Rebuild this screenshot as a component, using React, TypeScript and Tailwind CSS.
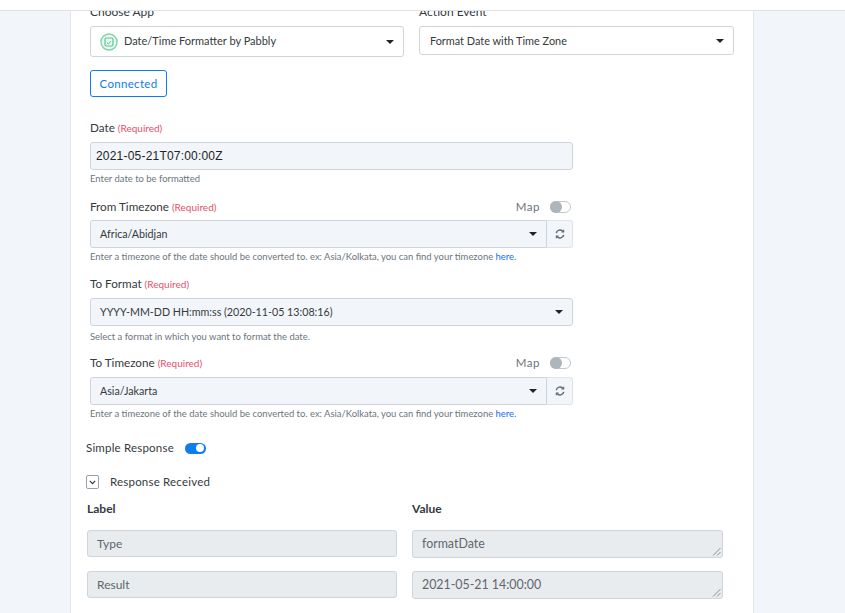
const font = "font-['Lato','Noto_Sans',sans-serif]";

function Required() {
  return <span className="ml-[3px] text-[10px] text-[#e2506c]">(Required)</span>;
}

function Caret() {
  return <span className="h-0 w-0 border-x-[4px] border-t-[4px] border-x-transparent border-t-[#212529]" />;
}

function AppLogo() {
  return (
    <svg width="18" height="18" viewBox="0 0 18 18" fill="none" className="shrink-0">
      <circle cx="9" cy="9" r="8" fill="#eaf8f1" stroke="#7fd3aa" strokeWidth="1.4" />
      <rect x="5" y="5" width="8" height="8" rx="1.5" stroke="#5fc396" strokeWidth="1.2" />
      <path d="M7 10l1.4 1L11 8" stroke="#5fc396" strokeWidth="1" />
    </svg>
  );
}

function RefreshIcon() {
  return (
    <svg width="10" height="10" viewBox="0 0 12 12" fill="none" stroke="#5b6670" strokeWidth="1.7">
      <path d="M1.5 5A4.6 4.6 0 0 1 9.6 3" />
      <path d="M10.5 7A4.6 4.6 0 0 1 2.4 9" />
      <path d="M10.4 0.8V3.6H7.6" strokeWidth="1.3" />
      <path d="M1.6 11.2V8.4H4.4" strokeWidth="1.3" />
    </svg>
  );
}

function MapToggle() {
  return (
    <div className="flex items-center gap-[10px]">
      <span className="text-[11.5px] tracking-[0.5px] text-[#6c757d]">Map</span>
      <span className="flex h-[12px] w-[21px] items-center rounded-full border border-[#c3c8cd] bg-white">
        <span className="-ml-px h-[12px] w-[12px] rounded-full bg-[#adb5bd]" />
      </span>
    </div>
  );
}

function HereHelp() {
  return (
    <p className="mt-[3px] text-[9.45px] leading-[12px] text-[#6c757d]">
      Enter a timezone of the date should be converted to. ex: Asia/Kolkata, you can find your timezone{" "}
      <span className="text-[#0d6efd]">here.</span>
    </p>
  );
}

function SelectWithRefresh({ value }: { value: string }) {
  return (
    <div className="flex h-[28px]">
      <div className="flex w-[457px] items-center justify-between rounded-l-[3px] border border-[#ced4da] bg-[#f2f5f9] pl-[9px] pr-[9px] text-[10.7px] text-[#343a40]">
        <span>{value}</span>
        <Caret />
      </div>
      <div className="flex w-[26px] items-center justify-center rounded-r-[3px] border border-l-0 border-[#e0e4e8] bg-[#f2f5f9]">
        <RefreshIcon />
      </div>
    </div>
  );
}

function ReadonlyPair({ label, value }: { label: string; value: string }) {
  return (
    <div className="flex gap-[15px]">
      <div className="flex h-[27px] w-[310px] items-center rounded-[3px] border border-[#ced4da] bg-[#e9ecef] pl-[9px] text-[12px] text-[#5f666d]">
        {label}
      </div>
      <div className="relative flex h-[28px] w-[311px] items-center rounded-[3px] border border-[#ced4da] bg-[#e9ecef] pl-[9px] text-[12.4px] text-[#5f666d]">
        {value}
        <svg width="9" height="9" viewBox="0 0 9 9" className="absolute bottom-[1px] right-[1px]" stroke="#777" strokeWidth="0.8">
          <path d="M1 8.5L8.5 1M5 8.5L8.5 5" />
        </svg>
      </div>
    </div>
  );
}

export default function App() {
  return (
    <div className={`flex h-[613px] w-[845px] flex-col overflow-hidden bg-[#f2f5f9] ${font}`}>
      <div className="relative z-10 h-[11px] shrink-0 border-b border-[#dfe2e6] bg-white" />
      <div className="ml-[70px] flex h-[602px] w-[684px] flex-col overflow-hidden border-x border-[#e3e7ec] bg-white pl-[19px]">
        {/* app + event selects */}
        <div className="-mt-[7px] flex gap-[15px]">
          <div className="w-[314px]">
            <div className="h-[15px] text-[12px] leading-[15px] text-[#343a40]">Choose App</div>
            <div className="mt-[7px] flex h-[31px] items-center justify-between rounded-[3px] border border-[#ced4da] bg-white pl-[9px] pr-[9px]">
              <span className="flex items-center gap-[6px] text-[11px] text-[#343a40]">
                <AppLogo />
                Date/Time Formatter by Pabbly
              </span>
              <Caret />
            </div>
          </div>
          <div className="w-[315px]">
            <div className="h-[15px] text-[12px] leading-[15px] text-[#343a40]">Action Event</div>
            <div className="mt-[7px] flex h-[29px] items-center justify-between rounded-[3px] border border-[#ced4da] bg-white pl-[10px] pr-[9px] pt-px text-[10.9px] text-[#343a40]">
              Format Date with Time Zone
              <Caret />
            </div>
          </div>
        </div>

        <button className="mt-[13px] h-[27px] w-[77px] rounded-[3px] border border-[#0d7bf2] text-[11.5px] tracking-[0.3px] text-[#0d7bf2]">
          Connected
        </button>

        <div className="mt-[24px] w-[483px]">
          <div className="h-[13px] text-[11.7px] leading-[13px] text-[#343a40]">
            Date
            <Required />
          </div>
          <div className="mt-[8px] flex h-[28px] items-center rounded-[3px] border border-[#ced4da] bg-[#f2f5f9] pl-[5px] font-['Liberation_Sans',sans-serif] text-[12px] tracking-[0.2px] text-[#212529]">
            2021-05-21T07:00:00Z
          </div>
          <p className="mt-[3px] text-[9.45px] leading-[12px] text-[#6c757d]">Enter date to be formatted</p>

          <div className="mt-[14px] flex h-[16px] items-center justify-between pr-[2px]">
            <div className="text-[11.7px] text-[#343a40]">
              From Timezone
              <Required />
            </div>
            <MapToggle />
          </div>
          <div className="mt-[5px]">
            <SelectWithRefresh value="Africa/Abidjan" />
          </div>
          <HereHelp />

          <div className="mt-[14px] h-[13px] text-[11.7px] leading-[13px] text-[#343a40]">
            To Format
            <Required />
          </div>
          <div className="mt-[8px] flex h-[28px] items-center justify-between rounded-[3px] border border-[#ced4da] bg-[#f2f5f9] pl-[9px] pr-[9px] text-[10.7px] text-[#343a40]">
            YYYY-MM-DD HH:mm:ss (2020-11-05 13:08:16)
            <Caret />
          </div>
          <p className="mt-[5px] text-[9.45px] leading-[12px] text-[#6c757d]">Select a format in which you want to format the date.</p>

          <div className="mt-[12px] flex h-[16px] items-center justify-between pr-[2px]">
            <div className="text-[11.7px] text-[#343a40]">
              To Timezone
              <Required />
            </div>
            <MapToggle />
          </div>
          <div className="mt-[6px]">
            <SelectWithRefresh value="Asia/Jakarta" />
          </div>
          <HereHelp />
        </div>

        <div className="-ml-[4px] mt-[21px] flex h-[14px] items-center gap-[11px] text-[11.5px] tracking-[0.2px] text-[#343a40]">
          Simple Response
          <span className="flex h-[11px] w-[21px] items-center justify-end rounded-full bg-[#0d7bf2] pr-[2px]">
            <span className="h-[8px] w-[8px] rounded-full bg-white" />
          </span>
        </div>

        <div className="-ml-[4px] mt-[20px] flex h-[14px] items-center gap-[11px] text-[11.5px] tracking-[0.2px] text-[#343a40]">
          <span className="flex h-[14px] w-[13px] items-center justify-center rounded-[2px] border border-[#9aa2a9]">
            <svg width="7" height="5" viewBox="0 0 7 5" fill="none" stroke="#343a40" strokeWidth="1.2">
              <path d="M0.8 0.8L3.5 3.6L6.2 0.8" />
            </svg>
          </span>
          Response Received
        </div>

        <div className="-ml-[3px] mt-[13px] flex h-[14px] items-center text-[12px] font-bold text-[#343a40]">
          <span className="w-[325px]">Label</span>
          <span>Value</span>
        </div>

        <div className="-ml-[3px] mt-[14px] flex flex-col gap-[13px]">
          <ReadonlyPair label="Type" value="formatDate" />
          <ReadonlyPair label="Result" value="2021-05-21 14:00:00" />
        </div>
      </div>
    </div>
  );
}
